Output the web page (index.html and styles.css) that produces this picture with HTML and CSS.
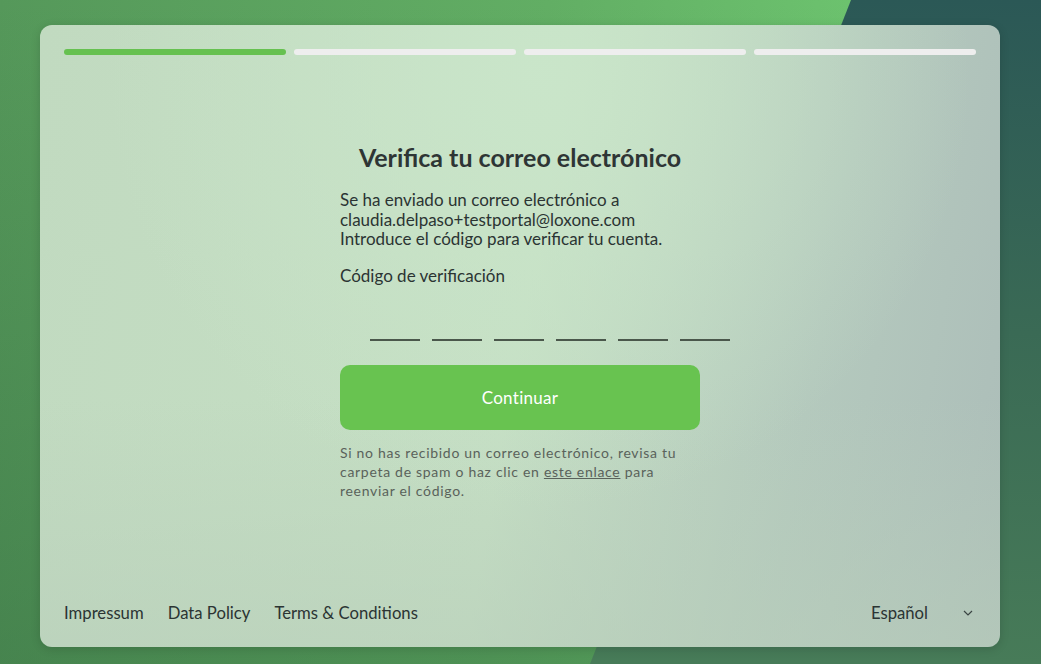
FILE: index.html
```html
<!DOCTYPE html>
<html lang="es">
<head>
<meta charset="utf-8">
<title>Verifica tu correo electrónico</title>
<link rel="stylesheet" href="styles.css">
</head>
<body>
<div class="bg-wedge"></div>
<div class="card">
  <div class="progress">
    <span class="seg active"></span>
    <span class="seg"></span>
    <span class="seg"></span>
    <span class="seg"></span>
  </div>
  <main class="content">
    <h1 class="title">Verifica tu correo electrónico</h1>
    <p class="info">Se ha enviado un correo electrónico a<br>claudia.delpaso+testportal@loxone.com<br>Introduce el código para verificar tu cuenta.</p>
    <label class="label">Código de verificación</label>
    <div class="code">
      <span class="digit"></span>
      <span class="digit"></span>
      <span class="digit"></span>
      <span class="digit"></span>
      <span class="digit"></span>
      <span class="digit"></span>
    </div>
    <button class="btn">Continuar</button>
    <p class="hint">Si no has recibido un correo electrónico, revisa tu carpeta de spam o haz clic en <a href="#" class="link">este enlace</a> para reenviar el código.</p>
  </main>
  <footer class="footer">
    <nav class="links">
      <a href="#">Impressum</a>
      <a href="#">Data Policy</a>
      <a href="#">Terms &amp; Conditions</a>
    </nav>
    <div class="lang">
      <span>Español</span>
      <svg class="chev" width="10" height="6" viewBox="0 0 10 6"><path d="M1 1l4 4 4-4" fill="none" stroke="#3a4443" stroke-width="1.2"/></svg>
    </div>
  </footer>
</div>
</body>
</html>
```

FILE: styles.css
```css
* { box-sizing: border-box; }
html, body { height: 100%; }
body {
  margin: 0;
  font-family: Lato, "Noto Sans", sans-serif;
  color: #2b3433;
  background:
    linear-gradient(to bottom, rgba(40,90,55,0) 0%, rgba(40,90,55,0.35) 100%),
    linear-gradient(95deg, #55985a 0%, #62ae64 50%, #6dc46f 80%);
  padding: 25px 41px 17px 40px;
  position: relative;
  overflow: hidden;
}
.bg-wedge {
  position: absolute;
  inset: 0;
  z-index: 0;
  background: linear-gradient(to bottom, #2b5856 0%, #3a6a55 50%, #477b58 100%);
  clip-path: polygon(851px 0, 100% 0, 100% 100%, 590px 100%);
}
.card {
  position: relative;
  z-index: 1;
  height: 622px;
  border-radius: 12px;
  box-shadow: 0 2px 10px rgba(0,0,0,0.15);
  background:
    radial-gradient(ellipse 45% 70% at 52% 8%, rgba(202,230,202,0.9) 0%, rgba(202,230,202,0) 100%),
    linear-gradient(to bottom, rgba(190,215,190,0) 60%, rgba(184,206,186,0.6) 100%),
    linear-gradient(100deg, #c1dac0 0%, #c5dfc4 50%, #b4c9bd 78%, #acbdb9 100%);
  padding: 24px 24px 23px 24px;
  display: flex;
  flex-direction: column;
}
.progress {
  display: flex;
  gap: 8px;
}
.seg {
  flex: 1;
  height: 6px;
  border-radius: 3px;
  background: #eeeeee;
}
.seg.active { background: #66c150; }

.content {
  width: 360px;
  margin: 87px auto 0;
  flex: 1;
}
.title {
  margin: 0 -40px;
  font-size: 25px;
  line-height: 30px;
  font-weight: 700;
  text-align: center;
  color: #2e3535;
  white-space: nowrap;
}
.info {
  margin: 18px 0 0;
  font-size: 17px;
  line-height: 19.5px;
}
.label {
  display: block;
  margin-top: 17px;
  font-size: 17px;
  line-height: 20px;
}
.code {
  display: flex;
  gap: 12px;
  margin-top: 15px;
  padding-left: 30px;
}
.digit {
  flex: none;
  width: 50px;
  height: 40px;
  border-bottom: 2px solid #4a574b;
}
.btn {
  display: block;
  width: 360px;
  height: 65px;
  margin-top: 24px;
  border: 0;
  border-radius: 10px;
  background: #68c350;
  color: #ffffff;
  font-family: inherit;
  font-size: 17px;
  font-weight: 400;
  letter-spacing: 0.3px;
}
.hint {
  margin: 13px 0 0;
  font-size: 14px;
  line-height: 19px;
  letter-spacing: 0.7px;
  color: #5a625b;
}
.link { color: #5a625b; text-decoration: underline; }

.footer {
  display: flex;
  justify-content: space-between;
  align-items: center;
  font-size: 16.7px;
  line-height: 22px;
}
.links { display: flex; gap: 24px; }
.links a { color: #2b3433; text-decoration: none; }
.lang {
  display: flex;
  align-items: center;
  gap: 35px;
  padding-right: 3px;
}
.chev { display: block; }
```
